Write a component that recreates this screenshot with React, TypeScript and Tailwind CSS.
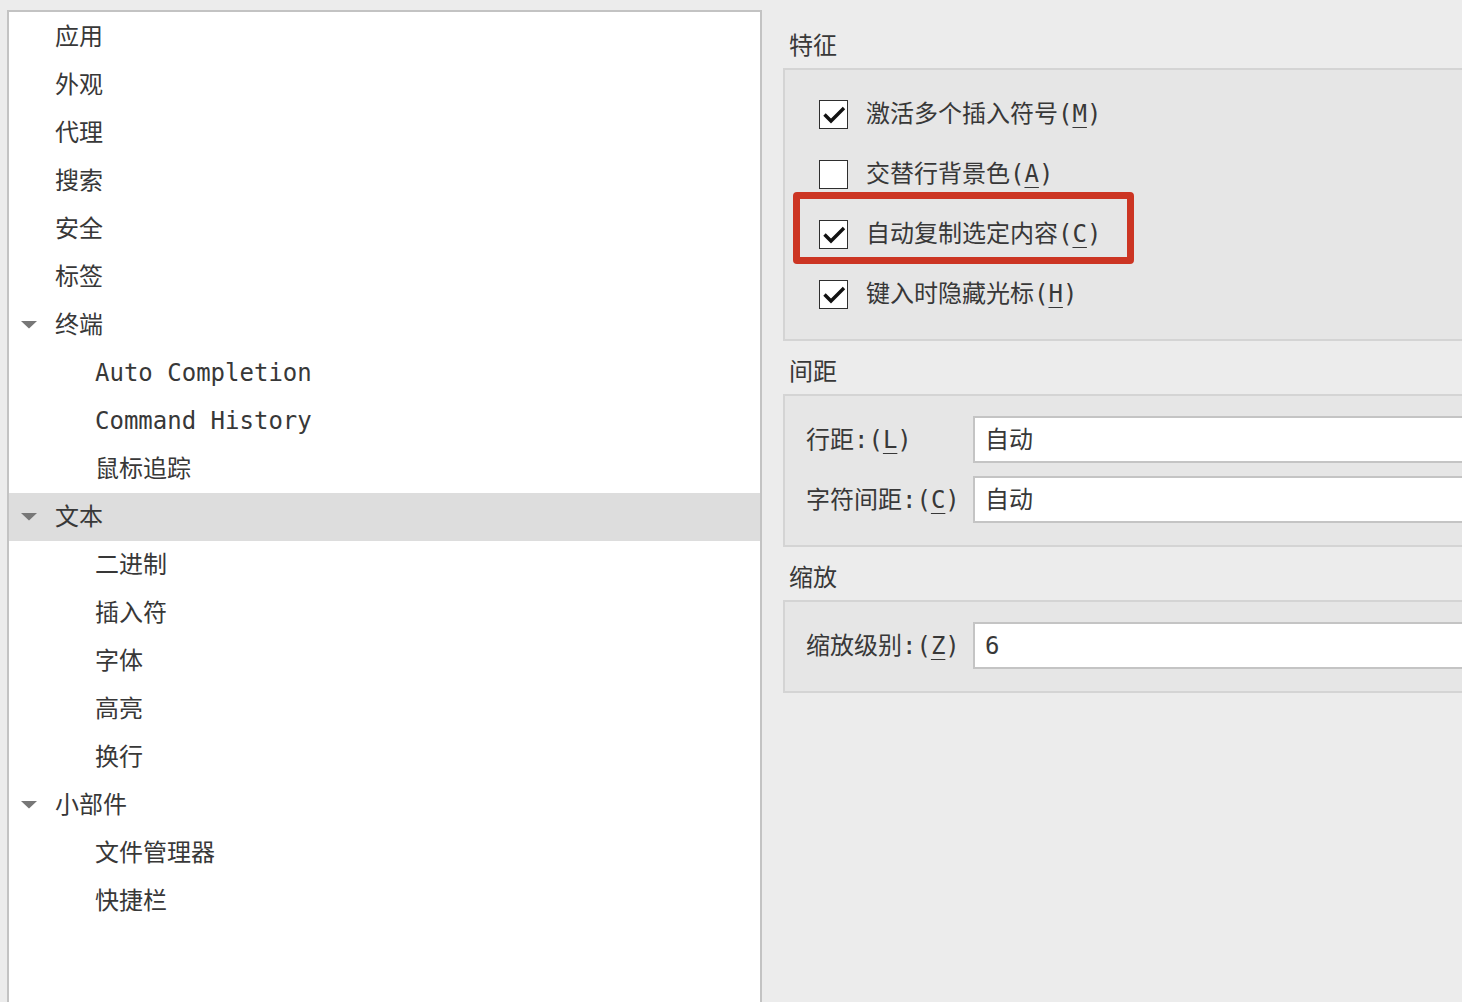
import React from "react";

type TreeItem = { label: string; level: 1 | 2; expanded?: boolean; selected?: boolean };

const tree: TreeItem[] = [
  { label: "应用", level: 1 },
  { label: "外观", level: 1 },
  { label: "代理", level: 1 },
  { label: "搜索", level: 1 },
  { label: "安全", level: 1 },
  { label: "标签", level: 1 },
  { label: "终端", level: 1, expanded: true },
  { label: "Auto Completion", level: 2 },
  { label: "Command History", level: 2 },
  { label: "鼠标追踪", level: 2 },
  { label: "文本", level: 1, expanded: true, selected: true },
  { label: "二进制", level: 2 },
  { label: "插入符", level: 2 },
  { label: "字体", level: 2 },
  { label: "高亮", level: 2 },
  { label: "换行", level: 2 },
  { label: "小部件", level: 1, expanded: true },
  { label: "文件管理器", level: 2 },
  { label: "快捷栏", level: 2 },
];

function Arrow() {
  return (
    <svg width="16" height="8" viewBox="0 0 16 8" className="block">
      <polygon points="0,0 16,0 8,7.5" fill="#777777" />
    </svg>
  );
}

function TreeRow({ item }: { item: TreeItem }) {
  const base = "h-[48px] flex items-center shrink-0";
  const bg = item.selected ? " bg-[#dddddd]" : "";
  if (item.level === 2) {
    return (
      <div className={base + bg + " pl-[86px]"}>
        <span>{item.label}</span>
      </div>
    );
  }
  return (
    <div className={base + bg + " pl-[12px]"}>
      <div className="w-[34px] flex items-center">{item.expanded ? <Arrow /> : null}</div>
      <span>{item.label}</span>
    </div>
  );
}

// Label with an underlined mnemonic letter, e.g. 激活多个插入符号(M)
function Mnemonic({ text, letter, colon }: { text: string; letter: string; colon?: boolean }) {
  return (
    <span className="whitespace-nowrap">
      {text}
      {colon ? ":" : ""}(
      <span className="underline decoration-1 underline-offset-[5px]">{letter}</span>)
    </span>
  );
}

function CheckBox({ checked }: { checked: boolean }) {
  return (
    <div className="w-[29px] h-[29px] shrink-0 bg-white border-[1.5px] border-[#2e2e2e] flex items-center justify-center">
      {checked ? (
        <svg width="26" height="26" viewBox="0 0 26 26">
          <path d="M3.5 13.5 L10 20 L23 7" fill="none" stroke="#111111" strokeWidth="3.4" strokeLinecap="butt" strokeLinejoin="miter" />
        </svg>
      ) : null}
    </div>
  );
}

function CheckRow({ text, letter, checked, marked }: { text: string; letter: string; checked: boolean; marked?: boolean }) {
  return (
    <div className="relative h-[60px] flex items-center gap-[18px]">
      <CheckBox checked={checked} />
      <Mnemonic text={text} letter={letter} />
      {marked ? (
        <div className="absolute left-[-26px] top-[-12px] w-[341px] h-[72px] border-[7px] border-[#cc3523] rounded-[4px] pointer-events-none" />
      ) : null}
    </div>
  );
}

function SectionTitle({ children, first }: { children: React.ReactNode; first?: boolean }) {
  return <div className={(first ? "" : "mt-[9px] ") + "h-[44px] flex items-center pl-[6px] shrink-0"}>{children}</div>;
}

function FieldRow({ text, letter, value }: { text: string; letter: string; value: string }) {
  return (
    <div className="flex items-center h-[47px]">
      <div className="w-[167px] shrink-0">
        <Mnemonic text={text} letter={letter} colon />
      </div>
      <div className="flex-1 h-[47px] bg-white border-2 border-[#c4c4c4] border-r-0 flex items-center pl-[10px]">
        {value}
      </div>
    </div>
  );
}

export default function App() {
  return (
    <div className="w-[1462px] h-[1002px] overflow-hidden bg-[#ececec] flex text-[24px] leading-none text-[#383838] font-['DejaVu_Sans_Mono','Noto_Sans_CJK_SC',monospace]">
      {/* category tree */}
      <div className="ml-[7px] mt-[10px] w-[755px] shrink-0 bg-white border-2 border-b-0 border-[#c3c3c3] pt-[1px] flex flex-col">
        {tree.map((item) => (
          <TreeRow key={item.label} item={item} />
        ))}
      </div>

      {/* settings page */}
      <div className="ml-[21px] flex-1 flex flex-col pt-[24px] min-w-0">
        <SectionTitle first>特征</SectionTitle>
        <div className="h-[273px] shrink-0 bg-[#e6e6e6] border-2 border-r-0 border-[#d4d4d4] pt-[14px] pl-[34px] flex flex-col">
          <CheckRow text="激活多个插入符号" letter="M" checked />
          <CheckRow text="交替行背景色" letter="A" checked={false} />
          <CheckRow text="自动复制选定内容" letter="C" checked marked />
          <CheckRow text="键入时隐藏光标" letter="H" checked />
        </div>

        <SectionTitle>间距</SectionTitle>
        <div className="h-[153px] shrink-0 bg-[#e6e6e6] border-2 border-r-0 border-[#d4d4d4] pt-[20px] pl-[21px] flex flex-col gap-[13px]">
          <FieldRow text="行距" letter="L" value="自动" />
          <FieldRow text="字符间距" letter="C" value="自动" />
        </div>

        <SectionTitle>缩放</SectionTitle>
        <div className="h-[93px] shrink-0 bg-[#e6e6e6] border-2 border-r-0 border-[#d4d4d4] pt-[20px] pl-[21px] flex flex-col">
          <FieldRow text="缩放级别" letter="Z" value="6" />
        </div>
      </div>
    </div>
  );
}
